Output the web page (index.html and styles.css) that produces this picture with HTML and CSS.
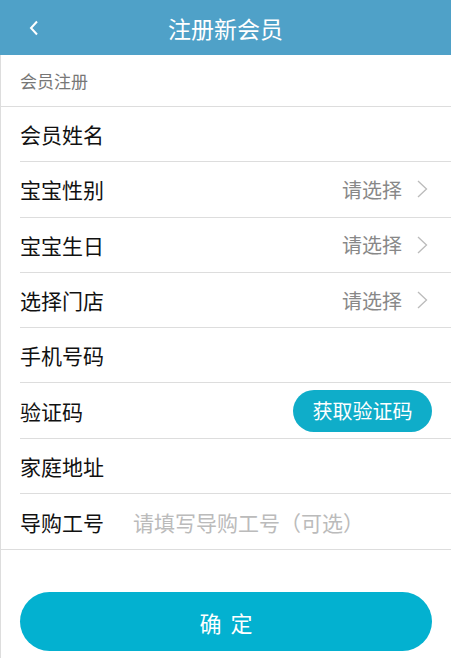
FILE: index.html
```html
<!DOCTYPE html>
<html lang="zh-CN">
  <head>
    <meta charset="UTF-8" />
    <meta name="viewport" content="width=device-width, initial-scale=1.0" />
    <title>注册新会员</title>
    <link rel="stylesheet" href="styles.css">
  </head>
  <body>
    <header class="top-bar">
      <a class="back" href="#">
        <svg width="10" height="16" viewBox="0 0 10 16">
          <path d="M8 1.5 L2 8 L8 14.5" fill="none" stroke="#fff" stroke-width="2" />
        </svg>
      </a>
      <h1>注册新会员</h1>
    </header>

    <div class="page">
      <div class="section-title">会员注册</div>

      <div class="form-list">
        <div class="row"><span class="label">会员姓名</span></div>
        <div class="row">
          <span class="label">宝宝性别</span>
          <span class="pick">请选择</span>
          <svg class="arrow" width="11" height="18" viewBox="0 0 11 18">
            <path d="M1 1 L9.5 9 L1 17" fill="none" stroke="#bbb" stroke-width="1.3" />
          </svg>
        </div>
        <div class="row">
          <span class="label">宝宝生日</span>
          <span class="pick">请选择</span>
          <svg class="arrow" width="11" height="18" viewBox="0 0 11 18">
            <path d="M1 1 L9.5 9 L1 17" fill="none" stroke="#bbb" stroke-width="1.3" />
          </svg>
        </div>
        <div class="row">
          <span class="label">选择门店</span>
          <span class="pick">请选择</span>
          <svg class="arrow" width="11" height="18" viewBox="0 0 11 18">
            <path d="M1 1 L9.5 9 L1 17" fill="none" stroke="#bbb" stroke-width="1.3" />
          </svg>
        </div>
        <div class="row"><span class="label">手机号码</span></div>
        <div class="row">
          <span class="label">验证码</span>
          <button class="btn-code">获取验证码</button>
        </div>
        <div class="row"><span class="label">家庭地址</span></div>
        <div class="row last">
          <span class="label">导购工号</span>
          <span class="hint">请填写导购工号（可选）</span>
        </div>
      </div>

      <div class="submit-wrap">
        <button class="btn-submit">确定</button>
      </div>
    </div>
  </body>
</html>
```

FILE: styles.css
```css
body {
  margin: 0;
  font-family: "Noto Sans CJK SC", "Noto Sans", sans-serif;
  background-color: #fff;
  color: #111;
}

.top-bar {
  height: 55px;
  background-color: #4fa1c8; /* header blue */
  display: flex;
  align-items: center;
  justify-content: center;
  position: relative;
}

.top-bar h1 {
  margin: 0;
  font-size: 23px;
  font-weight: normal;
  color: #fff;
}

.back {
  position: absolute;
  left: 29px;
  top: 20px;
  display: flex;
}

.page {
  border-left: 1px solid #ddd;
  min-height: 603px;
}

.section-title {
  height: 51px;
  line-height: 52px;
  padding-left: 19px;
  font-size: 17px;
  color: #777;
  border-bottom: 1px solid #ddd;
}

.form-list {
  padding-left: 19px;
}

.row {
  height: 54.3px;
  display: flex;
  align-items: center;
  border-bottom: 1px solid #ddd;
  padding-right: 19px;
  font-size: 21px;
}

.row.last {
  height: 55px;
  margin-left: -19px;
  padding-left: 19px;
}

.label {
  flex: 1;
}

.row.last .label {
  flex: none;
  width: 113px;
}

.pick {
  color: #888;
  font-size: 20px;
}

.arrow {
  margin-left: 15px;
  margin-right: 4px;
}

.hint {
  color: #bbb;
  font-size: 21px;
}

.btn-code {
  width: 139px;
  height: 42px;
  border: none;
  border-radius: 21px;
  background-color: #0fadc9;
  color: #fff;
  font-family: inherit;
  font-size: 20px;
  padding: 0;
}

.submit-wrap {
  padding: 42px 19px 0 19px;
}

.btn-submit {
  width: 100%;
  height: 59px;
  border: none;
  border-radius: 30px;
  background-color: #03b1d0;
  color: #fff;
  font-family: inherit;
  font-size: 22px;
  letter-spacing: 9px;
  text-indent: 9px;
}
```
